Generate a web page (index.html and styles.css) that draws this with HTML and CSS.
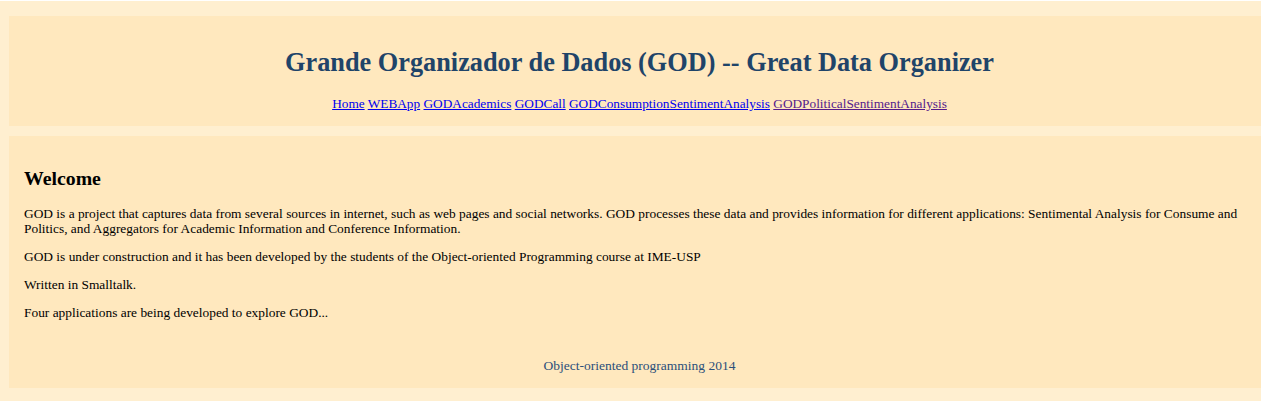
FILE: index.html
```html
<!DOCTYPE html>
<html>
<head>
<meta charset="utf-8">
<title>GOD</title>
<link rel="stylesheet" href="styles.css">
</head>
<body>
<div class="page">
  <header class="panel header">
    <h1 class="title">Grande Organizador de Dados (GOD) -- Great Data Organizer</h1>
    <nav class="nav">
      <a href="#">Home</a> <a href="#">WEBApp</a> <a href="#">GODAcademics</a> <a href="#">GODCall</a> <a href="#">GODConsumptionSentimentAnalysis</a> <a class="visited" href="#">GODPoliticalSentimentAnalysis</a>
    </nav>
  </header>
  <main class="panel content">
    <h2 class="welcome">Welcome</h2>
    <p class="text">GOD is a project that captures data from several sources in internet, such as web pages and social networks. GOD processes these data and provides information for different applications: Sentimental Analysis for Consume and Politics, and Aggregators for Academic Information and Conference Information.</p>
    <p class="text">GOD is under construction and it has been developed by the students of the Object-oriented Programming course at IME-USP</p>
    <p class="text">Written in Smalltalk.</p>
    <p class="text">Four applications are being developed to explore GOD...</p>
    <footer class="footer">Object-oriented programming 2014</footer>
  </main>
</div>
</body>
</html>
```

FILE: styles.css
```css
html {
  background: #ffffff;
}
body {
  margin: 0;
  font-family: "Liberation Serif", serif;
}
.page {
  margin-top: 1px;
  min-height: 400px;
  background: #ffefd0;
  padding: 15px 0 13px 9px;
  box-sizing: border-box;
  overflow: hidden;
  display: flex;
  flex-direction: column;
  gap: 10px;
}
.panel {
  width: calc(100% + 9px);
  background: #ffe8be;
  box-sizing: border-box;
}
.header {
  padding: 31px 0 15px;
  text-align: center;
}
.title {
  margin: 0;
  font-size: 26.3px;
  line-height: 32px;
  font-weight: bold;
  color: #1f4469;
}
.nav {
  margin-top: 17px;
  font-size: 13.3px;
  line-height: 15px;
}
.nav a {
  color: #0000ee;
}
.nav a.visited {
  color: #551a8b;
}
.content {
  padding: 31px 15px 15px;
}
.welcome {
  margin: 0 0 17px;
  font-size: 19.8px;
  line-height: 22px;
  font-weight: bold;
  color: #000;
}
.text {
  margin: 0 0 13px;
  font-size: 13.4px;
  line-height: 15px;
  color: #000;
}
.footer {
  margin-top: 38px;
  text-align: center;
  font-size: 13.5px;
  line-height: 15px;
  color: #2b4f7a;
}
```
